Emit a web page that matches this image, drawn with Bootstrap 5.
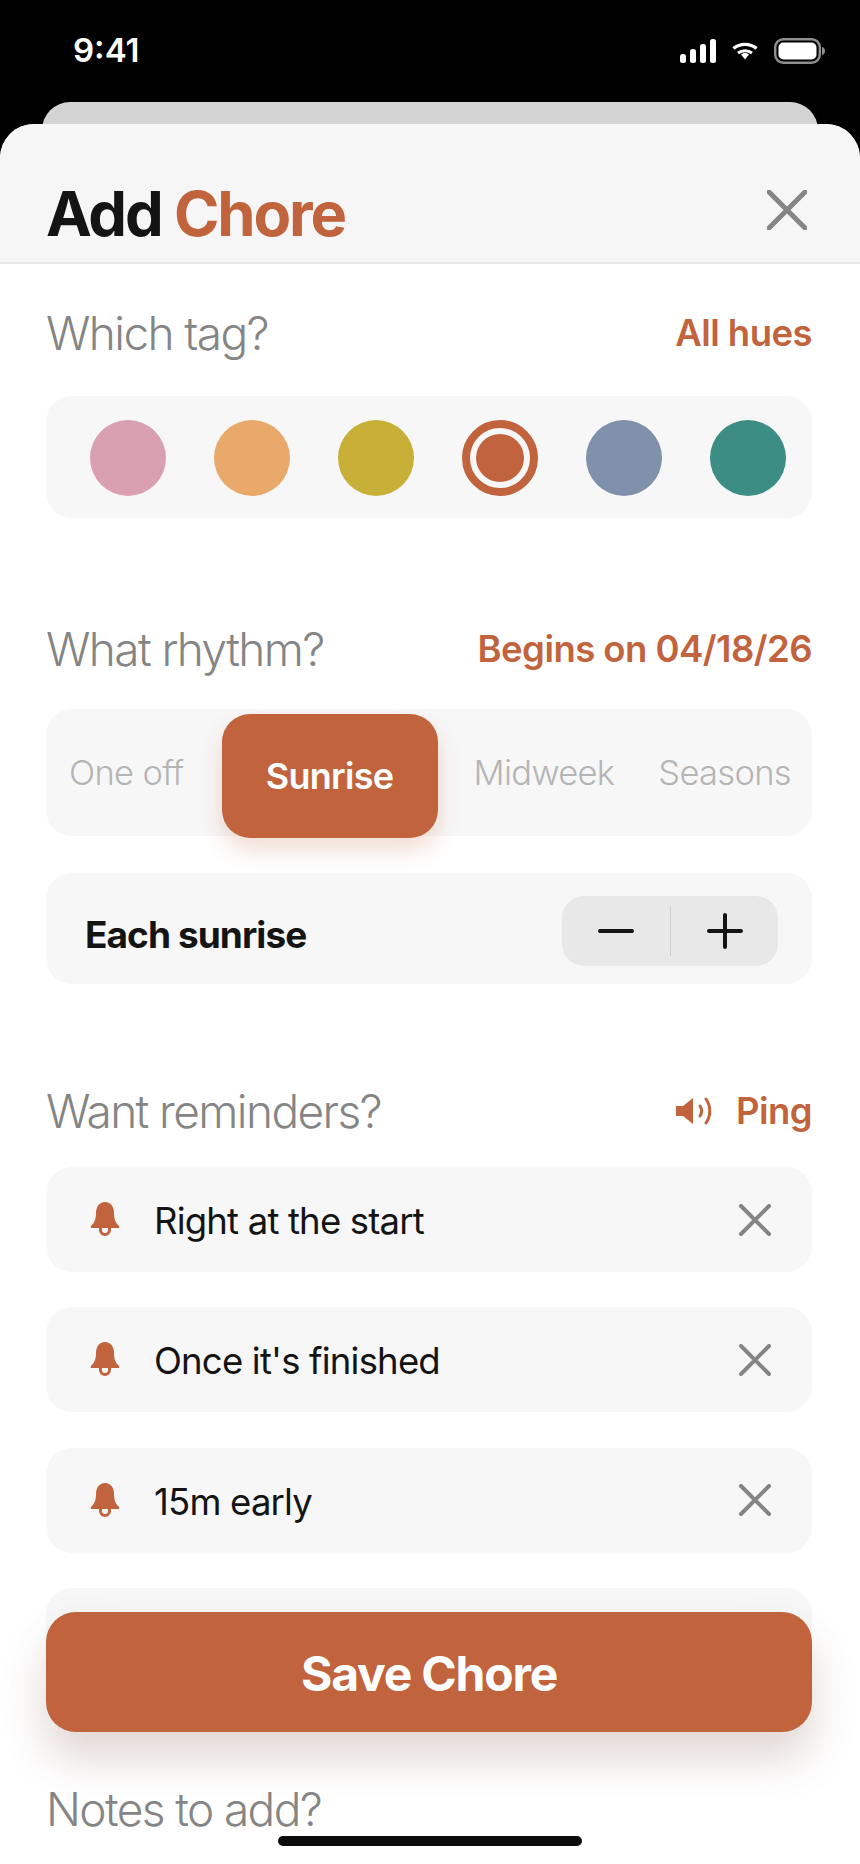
<!DOCTYPE html>
<html lang="en">
<head>
    <meta charset="UTF-8">
    <meta name="viewport" content="width=device-width, initial-scale=1.0">
    <title>Add Chore</title>
    <link rel="stylesheet" href="https://cdn.jsdelivr.net/npm/bootstrap@5.3.0/dist/css/bootstrap.min.css">
    <style>
        body {
            background-color: #000;
            font-family: "Inter", "Liberation Sans", sans-serif;
        }
        .phone {
            width: 860px;
            height: 1864px;
            overflow: hidden;
            background: #000;
        }
        .status-row {
            height: 102px;
            padding: 0 35px 0 73px;
            color: #fff;
        }
        .status-time {
            font-size: 33px;
            font-weight: 600;
            line-height: 40px;
            margin-top: -2px;
        }
        .back-sheet {
            height: 40px;
            margin: 0 42px -18px;
            background: #d4d4d4;
            border-radius: 28px 28px 0 0;
        }
        .sheet {
            height: 1740px;
            background: #fff;
            border-radius: 34px 34px 0 0;
        }
        .sheet-head {
            height: 140px;
            padding: 0 53px 0 46px;
            background: #f6f6f6;
            border-bottom: 2px solid #e8e8e8;
            border-radius: 34px 34px 0 0;
        }
        .sheet-title {
            font-size: 61.5px;
            font-weight: 700;
            letter-spacing: -0.035em;
            line-height: 70px;
            color: #141414;
            margin: 0 0 13px;
        }
        .accent { color: #c1633c; }
        .sheet-body { padding: 44px 48px 0 46px; }
        .label-row { height: 50px; }
        .label-text {
            font-size: 46px;
            font-weight: 300;
            letter-spacing: -0.035em;
            line-height: 50px;
            color: #858585;
        }
        .label-action {
            font-size: 36.5px;
            font-weight: 600;
            letter-spacing: -0.015em;
            color: #c1633c;
        }
        .panel-soft {
            background: #f7f7f7;
            border-radius: 26px;
        }
        .hue-row {
            height: 122px;
            margin-top: 38px;
            padding: 2px 0 0 44px;
            gap: 48px;
        }
        .hue-dot {
            width: 76px;
            height: 76px;
            border-radius: 50%;
        }
        .hue-on {
            border: 8px solid #c1633c;
            padding: 6px;
            background: #fff content-box;
            position: relative;
        }
        .hue-on::after {
            content: "";
            display: block;
            width: 48px;
            height: 48px;
            border-radius: 50%;
            background: #c1633c;
        }
        .rhythm-head { margin-top: 106px; }
        .rhythm-tabs {
            height: 127px;
            margin-top: 35px;
            padding: 5px 0 0 23px;
            gap: 38px;
        }
        .tab-item {
            height: 118px;
            line-height: 118px;
            font-size: 34.5px;
            font-weight: 300;
            letter-spacing: -0.02em;
            color: #b5b5b5;
        }
        .tab-on {
            width: 216px;
            height: 124px;
            line-height: 124px;
            text-align: center;
            font-size: 36px;
            font-weight: 600;
            color: #fff;
            background: #c1633c;
            border-radius: 28px;
            box-shadow: 0 12px 22px rgba(193, 99, 60, 0.22);
        }
        .tab-mid { margin-left: -2px; }
        .tab-last { margin-left: 6px; }
        .each-row {
            height: 111px;
            margin-top: 37px;
            padding: 5px 34px 0 39px;
        }
        .each-text {
            font-size: 37px;
            font-weight: 700;
            letter-spacing: -0.025em;
            color: #141414;
            margin-top: 7px;
        }
        .stepper {
            width: 216px;
            height: 70px;
            background: #e8e8e8;
            border-radius: 22px;
        }
        .stepper-cell { width: 108px; height: 50px; }
        .stepper-cell + .stepper-cell { border-left: 1px solid #cfcfcf; }
        .reminder-head { margin-top: 102px; }
        .reminder-list {
            margin-top: 31px;
            gap: 35.3px;
        }
        .reminder-row {
            height: 105px;
            padding: 0 41px 0 44px;
        }
        .reminder-text {
            font-size: 36.5px;
            font-weight: 400;
            letter-spacing: -0.022em;
            color: #141414;
            margin: 4px 0 0 34px;
        }
        .notes-head { margin-top: 91px; }
        .save-btn {
            left: 46px;
            bottom: 132px;
            width: 766px;
            height: 120px;
            padding-top: 9px;
            font-size: 48px;
            font-weight: 700;
            letter-spacing: -0.025em;
            color: #fff;
            background: #c1633c;
            border: 0;
            border-radius: 30px;
            box-shadow: 0 26px 44px rgba(120, 70, 50, 0.22);
        }
        .home-bar {
            left: 278px;
            bottom: 18px;
            width: 304px;
            height: 10px;
            border-radius: 5px;
            background: #0c0c0c;
        }
    </style>
</head>
<body>
    <div class="phone position-relative">
        <div class="status-row d-flex justify-content-between align-items-center">
            <div class="status-time">9:41</div>
            <div class="d-flex align-items-center">
                <svg width="36" height="24" viewBox="0 0 36 24" fill="#fff">
                    <rect x="0" y="15" width="6" height="9" rx="2.5"/>
                    <rect x="10" y="10" width="6" height="14" rx="2.5"/>
                    <rect x="20" y="5" width="6" height="19" rx="2.5"/>
                    <rect x="30" y="0" width="6" height="24" rx="2.5"/>
                </svg>
                <svg class="ms-3" width="26" height="18" viewBox="0 0 26 18" fill="none" stroke="#fff" stroke-width="3.4">
                    <path d="M1.5 6.5 C8 1 18 1 24.5 6.5"/>
                    <path d="M6 11 C10 8 16 8 20 11" stroke-width="3"/>
                    <path d="M9 12.5 L13 17.5 L17 12.5 C15 10.5 11 10.5 9 12.5Z" fill="#fff" stroke="none"/>
                </svg>
                <svg class="ms-3" width="51" height="26" viewBox="0 0 51 26" fill="none">
                    <rect x="1.2" y="1.2" width="44.6" height="23.6" rx="8" stroke="#8e8e8e" stroke-width="2.4"/>
                    <rect x="4.5" y="4.5" width="38" height="17" rx="5" fill="#fff"/>
                    <path d="M48 9 C50 9.5 51 11 51 13 C51 15 50 16.5 48 17Z" fill="#8e8e8e"/>
                </svg>
            </div>
        </div>
        <div class="back-sheet"></div>
        <div class="sheet position-relative">
            <div class="sheet-head d-flex justify-content-between align-items-end">
                <h1 class="sheet-title">Add <span class="accent">Chore</span></h1>
                <svg class="mb-4 pb-2" width="40" height="48" viewBox="0 0 40 40" stroke="#858585" stroke-width="5" stroke-linecap="round">
                    <path d="M2 2 L38 38 M38 2 L2 38"/>
                </svg>
            </div>
            <div class="sheet-body">
                <div class="label-row d-flex justify-content-between align-items-center">
                    <span class="label-text">Which tag?</span>
                    <span class="label-action">All hues</span>
                </div>
                <div class="hue-row panel-soft d-flex align-items-center">
                    <div class="hue-dot" style="background:#d9a0b2"></div>
                    <div class="hue-dot" style="background:#e8a96b"></div>
                    <div class="hue-dot" style="background:#c8af38"></div>
                    <div class="hue-dot hue-on"></div>
                    <div class="hue-dot" style="background:#7f91ab"></div>
                    <div class="hue-dot" style="background:#3c8e84"></div>
                </div>

                <div class="label-row rhythm-head d-flex justify-content-between align-items-center">
                    <span class="label-text">What rhythm?</span>
                    <span class="label-action">Begins on 04/18/26</span>
                </div>
                <div class="rhythm-tabs panel-soft d-flex align-items-start">
                    <div class="tab-item">One off</div>
                    <div class="tab-item tab-on">Sunrise</div>
                    <div class="tab-item tab-mid">Midweek</div>
                    <div class="tab-item tab-last">Seasons</div>
                </div>
                <div class="each-row panel-soft d-flex justify-content-between align-items-center">
                    <span class="each-text">Each sunrise</span>
                    <div class="stepper d-flex align-items-center">
                        <div class="stepper-cell d-flex align-items-center justify-content-center">
                            <svg width="36" height="36" viewBox="0 0 36 36" stroke="#141414" stroke-width="4" stroke-linecap="round"><path d="M2 18 H34"/></svg>
                        </div>
                        <div class="stepper-cell d-flex align-items-center justify-content-center">
                            <svg width="36" height="36" viewBox="0 0 36 36" stroke="#141414" stroke-width="4" stroke-linecap="round"><path d="M2 18 H34 M18 2 V34"/></svg>
                        </div>
                    </div>
                </div>

                <div class="label-row reminder-head d-flex justify-content-between align-items-center">
                    <span class="label-text">Want reminders?</span>
                    <span class="label-action d-flex align-items-center">
                        <svg class="me-4" width="36" height="28" viewBox="0 0 36 28" fill="none" stroke="#c1633c" stroke-width="3" stroke-linecap="round">
                            <path d="M0 9 H7 L17 1 V27 L7 19 H0Z" fill="#c1633c" stroke="none"/>
                            <path d="M24 9 C26 12 26 16 24 19"/>
                            <path d="M30 2 C35 9 35 19 30 26"/>
                        </svg>
                        Ping
                    </span>
                </div>
                <div class="reminder-list d-flex flex-column">
                    <div class="reminder-row panel-soft d-flex align-items-center">
                        <svg width="30" height="35" viewBox="0 0 30 35" fill="none"><path d="M15 0 C9 0 6 5 6 11 C6 18 4 21 1 24 Q0 26 2 26 H28 Q30 26 29 24 C26 21 24 18 24 11 C24 5 21 0 15 0Z" fill="#c1633c"/><path d="M10.500 26 v2 a4.500 4.500 0 0 0 9 0 v-2" stroke="#c1633c" stroke-width="3"/></svg>
                        <span class="reminder-text flex-grow-1">Right at the start</span>
                        <svg width="32" height="32" viewBox="0 0 32 32" stroke="#858585" stroke-width="4" stroke-linecap="round"><path d="M2 2 L30 30 M30 2 L2 30"/></svg>
                    </div>
                    <div class="reminder-row panel-soft d-flex align-items-center">
                        <svg width="30" height="35" viewBox="0 0 30 35" fill="none"><path d="M15 0 C9 0 6 5 6 11 C6 18 4 21 1 24 Q0 26 2 26 H28 Q30 26 29 24 C26 21 24 18 24 11 C24 5 21 0 15 0Z" fill="#c1633c"/><path d="M10.500 26 v2 a4.500 4.500 0 0 0 9 0 v-2" stroke="#c1633c" stroke-width="3"/></svg>
                        <span class="reminder-text flex-grow-1">Once it's finished</span>
                        <svg width="32" height="32" viewBox="0 0 32 32" stroke="#858585" stroke-width="4" stroke-linecap="round"><path d="M2 2 L30 30 M30 2 L2 30"/></svg>
                    </div>
                    <div class="reminder-row panel-soft d-flex align-items-center">
                        <svg width="30" height="35" viewBox="0 0 30 35" fill="none"><path d="M15 0 C9 0 6 5 6 11 C6 18 4 21 1 24 Q0 26 2 26 H28 Q30 26 29 24 C26 21 24 18 24 11 C24 5 21 0 15 0Z" fill="#c1633c"/><path d="M10.500 26 v2 a4.500 4.500 0 0 0 9 0 v-2" stroke="#c1633c" stroke-width="3"/></svg>
                        <span class="reminder-text flex-grow-1">15m early</span>
                        <svg width="32" height="32" viewBox="0 0 32 32" stroke="#858585" stroke-width="4" stroke-linecap="round"><path d="M2 2 L30 30 M30 2 L2 30"/></svg>
                    </div>
                    <div class="reminder-row panel-soft"></div>
                </div>

                <div class="label-row notes-head d-flex align-items-center">
                    <span class="label-text">Notes to add?</span>
                </div>
            </div>
        </div>
        <button class="btn save-btn position-absolute">Save Chore</button>
        <div class="home-bar position-absolute"></div>
    </div>
    <script src="https://cdn.jsdelivr.net/npm/bootstrap@5.3.0/dist/js/bootstrap.bundle.min.js"></script>
</body>
</html>
